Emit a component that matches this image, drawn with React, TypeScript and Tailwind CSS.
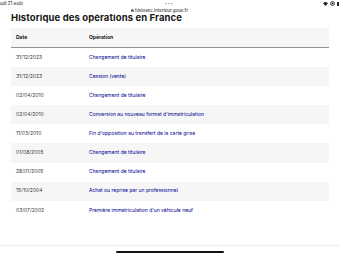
import { Lock } from "lucide-react";

const rows = [
  ["31/12/2023", "Changement de titulaire"],
  ["31/12/2023", "Cession (vente)"],
  ["02/04/2010", "Changement de titulaire"],
  ["02/04/2010", "Conversion au nouveau format d'immatriculation"],
  ["11/03/2010", "Fin d'opposition au transfert de la carte grise"],
  ["01/08/2005", "Changement de titulaire"],
  ["28/01/2005", "Changement de titulaire"],
  ["15/10/2004", "Achat ou reprise par un professionnel"],
  ["03/07/2002", "Première immatriculation d'un véhicule neuf"],
];

export default function App() {
  return (
    <div className="relative w-[340px] h-[255px] overflow-hidden bg-white font-['Inter',sans-serif]">
      {/* page content, scrolled under the status bar */}
      <div className="pl-[11px] pr-[11px] pt-[13px]">
        <h1 className="h-[15px] text-[9.5px] leading-[10px] font-bold text-[#161616] tracking-[0.1px]">
          Historique des opérations en France
        </h1>
        <div className="w-[318px]">
          <div className="flex items-center h-[20px] bg-[#f6f6f6] border-b border-[#929292] text-[5px] font-bold text-[#161616]">
            <div className="w-[78px] pl-[5px]">Date</div>
            <div>Opération</div>
          </div>
          {rows.map(([d, op], i) => (
            <div
              key={i}
              className={`flex items-center h-[19.1px] text-[5px] ${i % 2 === 1 ? "bg-[#f6f6f6]" : "bg-white"}`}
            >
              <div className="w-[78px] pl-[5px] text-[#3a3a3a]">{d}</div>
              <div className="text-[#000091]">{op}</div>
            </div>
          ))}
        </div>
      </div>

      {/* status bar overlay */}
      <div className="absolute top-0 left-0 w-full h-[14px] bg-white">
        <span className="absolute left-0 top-[1px] text-[4.5px] leading-[5px] text-[#111]">udi 21 août</span>
        <span className="absolute left-[165px] top-[1px] text-[4px] leading-[5px] tracking-[0.5px] text-[#888]">•••</span>
        <div className="absolute left-[131px] top-[7.5px] flex items-center gap-[1px] text-[4.5px] leading-[5px] text-[#111]">
          <Lock className="w-[3px] h-[3px]" strokeWidth={4} />
          <span>histovec.interieur.gouv.fr</span>
        </div>
        <div className="absolute right-[1px] top-[1px] flex items-center gap-[2px]">
          <svg width="5" height="4" viewBox="0 0 10 8">
            <path d="M5 8 L0 2.5 A7 7 0 0 1 10 2.5 Z" fill="#222" />
          </svg>
          <svg width="5" height="5" viewBox="0 0 10 10">
            <circle cx="5" cy="5" r="4" fill="none" stroke="#222" strokeWidth="1.5" />
            <circle cx="5" cy="5" r="2" fill="#222" />
          </svg>
          <div className="w-[2px] h-[4px] bg-[#222]" />
        </div>
      </div>

      {/* bottom browser edge */}
      <div className="absolute left-0 top-[245px] w-full h-[10px] bg-white border-t border-[#eeeeee]">
        <div className="absolute left-[116px] top-[5px] w-[108px] h-[2px] rounded-full bg-[#111]" />
      </div>
    </div>
  );
}
